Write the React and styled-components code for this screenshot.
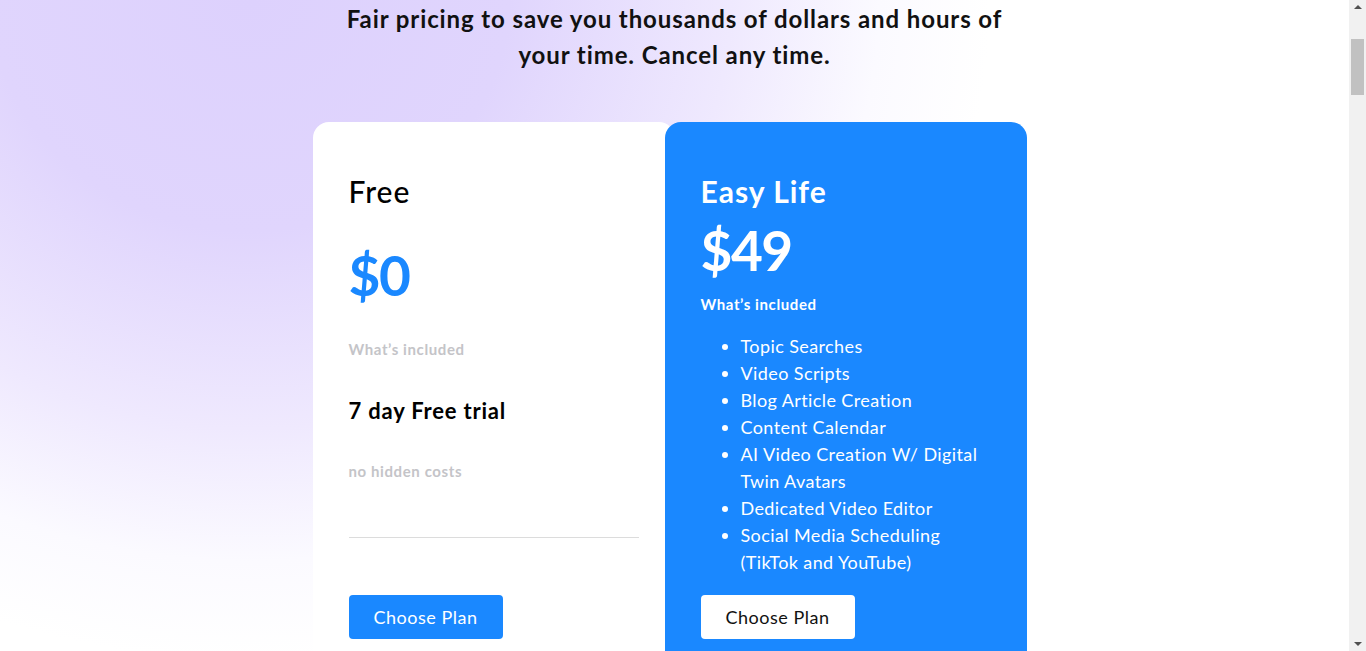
import React from "react";
import styled, { createGlobalStyle } from "styled-components";

const Global = createGlobalStyle`
  html, body { margin: 0; padding: 0; }
  body {
    font-family: "Lato", "Noto Sans", sans-serif;
    background: #ffffff;
    color: #000;
  }
  * { box-sizing: border-box; }
`;

const Page = styled.div`
  min-height: 7170px;
  padding-right: 17px;
  background:
    radial-gradient(ellipse 740px 660px at 250px 0px, #ddd1fd 0%, #e0d5fd 35%, #efe9fe 65%, #fbfaff 85%, rgba(255,255,255,0) 100%),
    #ffffff;
  background-repeat: no-repeat;
`;

const ScrollTrack = styled.div`
  position: fixed;
  top: 0;
  right: 0;
  width: 17px;
  height: 100vh;
  background: #f1f1f1;
  display: flex;
  flex-direction: column;
  align-items: center;
  justify-content: space-between;
  padding: 5px 0;
`;

const Arrow = styled.div`
  width: 0;
  height: 0;
  border-left: 4px solid transparent;
  border-right: 4px solid transparent;
  ${(p) => (p.$down ? "border-top: 4px solid #505050;" : "border-bottom: 4px solid #505050;")}
`;

const Thumb = styled.div`
  position: absolute;
  top: 39px;
  left: 2px;
  width: 13px;
  height: 56px;
  background: #c1c1c1;
`;

const Section = styled.section`
  display: flex;
  flex-direction: column;
  align-items: center;
`;

const Lead = styled.p`
  margin: 0;
  padding-top: 1px;
  width: 700px;
  text-align: center;
  font-size: 24px;
  line-height: 36px;
  font-weight: 700;
  letter-spacing: 0.9px;
  color: #111;
`;

const Cards = styled.div`
  margin-top: 49px;
  width: 724px;
  display: flex;
  align-items: stretch;
`;

const Card = styled.div`
  position: relative;
  width: 362px;
  min-height: 620px;
  padding: 51px 36px 40px;
  border-radius: 16px;
  background: ${(p) => (p.$featured ? "#1a88ff" : "#ffffff")};
  color: ${(p) => (p.$featured ? "#ffffff" : "#000000")};
  margin-left: ${(p) => (p.$featured ? "-10px" : "0")};
  display: flex;
  flex-direction: column;
`;

const PlanName = styled.h3`
  margin: 0;
  font-size: 30px;
  line-height: 36px;
  letter-spacing: 1px;
  font-weight: ${(p) => (p.$featured ? 700 : 500)};
`;

const Price = styled.div`
  margin-top: ${(p) => (p.$featured ? "11px" : "36px")};
  font-size: 55px;
  line-height: 60px;
  letter-spacing: -1.5px;
  font-weight: 700;
  color: ${(p) => (p.$featured ? "#ffffff" : "#1a88ff")};
`;

const Included = styled.div`
  margin-top: ${(p) => (p.$featured ? "14px" : "34px")};
  font-size: 15px;
  line-height: 20px;
  letter-spacing: 0.6px;
  font-weight: 700;
  color: ${(p) => (p.$featured ? "#ffffff" : "#c4c4c8")};
`;

const Trial = styled.div`
  margin-top: 37px;
  font-size: 22px;
  line-height: 30px;
  letter-spacing: 0.8px;
  font-weight: 700;
  color: #000;
`;

const Note = styled.div`
  margin-top: 35px;
  font-size: 15px;
  line-height: 20px;
  letter-spacing: 0.6px;
  font-weight: 700;
  color: #c4c4c8;
`;

const Divider = styled.hr`
  margin: 56px 0 0;
  border: none;
  border-top: 1px solid #dcdcdc;
  width: 290px;
`;

const Features = styled.ul`
  margin: 19px 0 0;
  padding-left: 40px;
  font-size: 18px;
  line-height: 27px;
  letter-spacing: 0.4px;
  font-weight: 400;
  li { padding: 0; }
`;

const Button = styled.button`
  margin-top: ${(p) => p.$mt};
  width: 154px;
  height: 44px;
  border: none;
  border-radius: 4px;
  font-family: inherit;
  font-size: 18px;
  letter-spacing: 0.5px;
  font-weight: 400;
  cursor: pointer;
  background: ${(p) => (p.$light ? "#ffffff" : "#1a88ff")};
  color: ${(p) => (p.$light ? "#111111" : "#ffffff")};
`;

const features = [
  "Topic Searches",
  "Video Scripts",
  "Blog Article Creation",
  "Content Calendar",
  "AI Video Creation W/ Digital Twin Avatars",
  "Dedicated Video Editor",
  "Social Media Scheduling (TikTok and YouTube)",
];

export default function App() {
  return (
    <>
      <Global />
      <Page>
        <Section>
          <Lead>
            Fair pricing to save you thousands of dollars and hours of your time. Cancel any time.
          </Lead>
          <Cards>
            <Card>
              <PlanName>Free</PlanName>
              <Price>$0</Price>
              <Included>What’s included</Included>
              <Trial>7 day Free trial</Trial>
              <Note>no hidden costs</Note>
              <Divider />
              <Button $mt="57px">Choose Plan</Button>
            </Card>
            <Card $featured>
              <PlanName $featured>Easy Life</PlanName>
              <Price $featured>$49</Price>
              <Included $featured>What’s included</Included>
              <Features>
                {features.map((f) => (
                  <li key={f}>{f}</li>
                ))}
              </Features>
              <Button $light $mt="19px">Choose Plan</Button>
            </Card>
          </Cards>
        </Section>
      </Page>
      <ScrollTrack aria-hidden="true">
        <Arrow />
        <Thumb />
        <Arrow $down />
      </ScrollTrack>
    </>
  );
}
